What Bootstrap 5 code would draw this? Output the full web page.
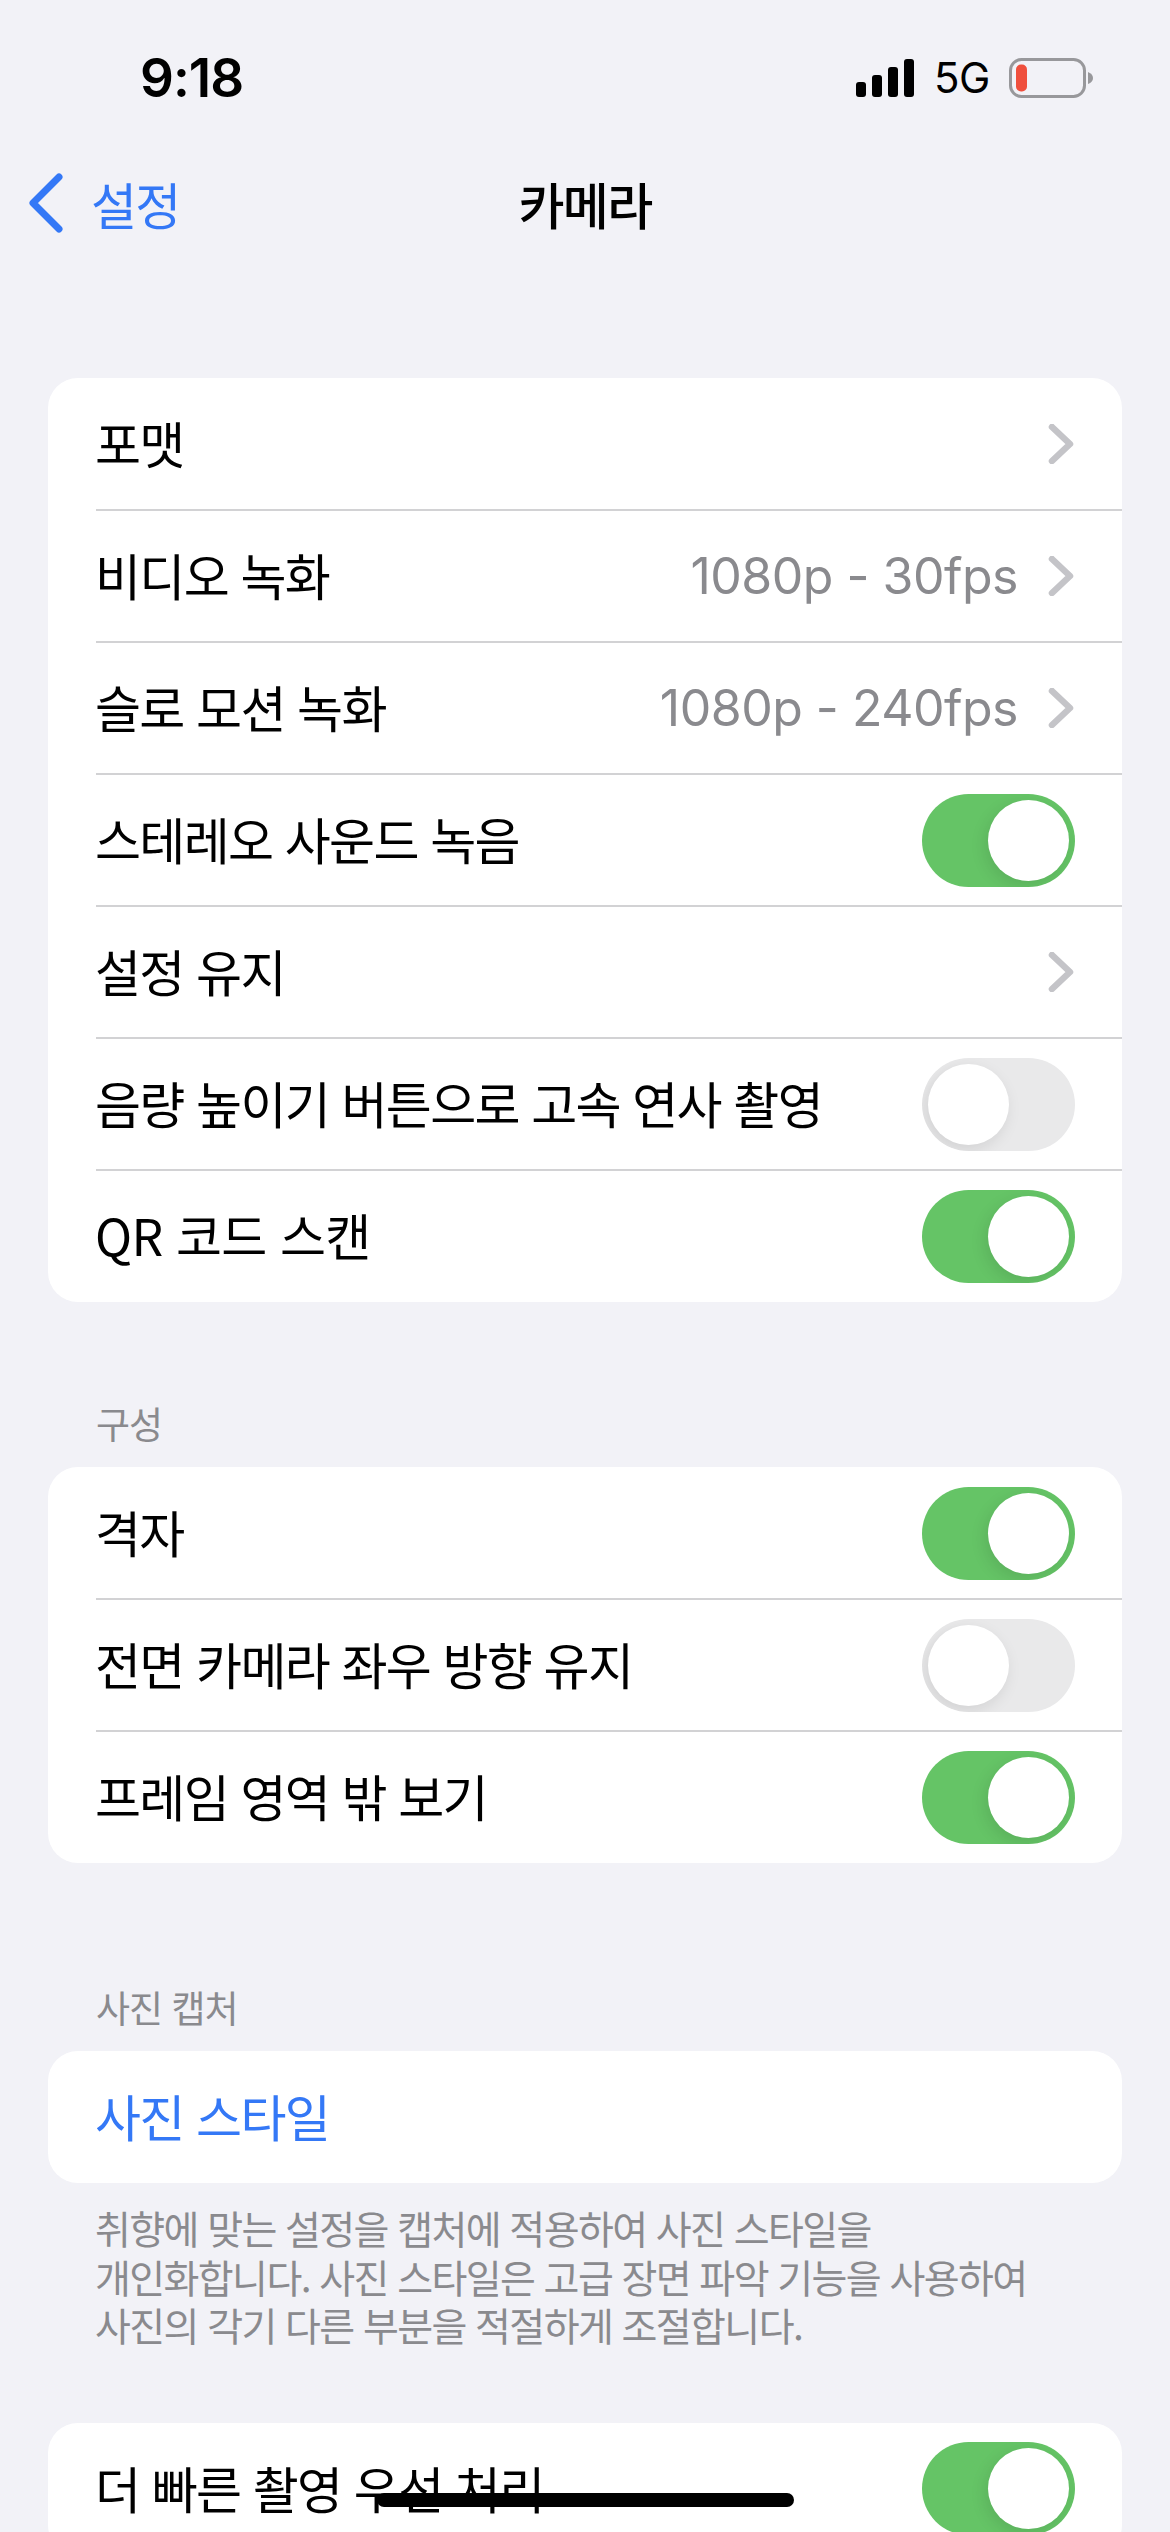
<!DOCTYPE html>
<html lang="ko">
<head>
<meta charset="utf-8">
<title>카메라</title>
<link href="https://cdn.jsdelivr.net/npm/bootstrap@5.3.0/dist/css/bootstrap.min.css" rel="stylesheet">
<style>
html,body{height:2532px;overflow:hidden}
body{background:#f2f2f7;color:#000;font-family:"Noto Sans CJK KR","Liberation Sans",sans-serif;font-size:50px;line-height:1.2;letter-spacing:-1.65px}
.status-row{height:161px;padding:52px 0 0 140px}
.clock{font:600 53px/52px Inter,sans-serif;letter-spacing:-1px;width:104px}
.status-icons{margin-left:612px;gap:20px;height:52px}
.net{font:400 42px/52px Inter,sans-serif;letter-spacing:-.5px;width:55px}
.nav-row{height:84px;grid-template-columns:1fr auto 1fr;padding:0 28px}
.back-link{color:#3478f6;text-decoration:none;gap:27px;font-size:50px}
.nav-title{font-weight:500;font-size:50px}
.groups{padding:133px 48px 0}
.ios-group{background:#fff;border:0;border-radius:30px;--bs-list-group-bg:#fff}
.ios-row{height:132px;padding:0 48px 0 47px;border:0;background:transparent;color:#000;position:relative}
.ios-row+.ios-row::before{content:"";position:absolute;left:48px;right:0;top:-1px;height:2px;background:#d2d2d4}
.ios-row .lab{flex:1;padding-bottom:4px}
.ios-row .lab-latin{letter-spacing:-.65px}
.val{font:400 50px/1 Inter,"Liberation Sans",sans-serif;color:#8a8a8e;letter-spacing:-.5px;margin-right:30px}
.chev{width:26px;height:40px;display:block}
.ctl{width:153px;height:93px;border-radius:47px;background:#e9e9ea;position:relative;overflow:hidden;margin-right:-1px}
.ctl::after{content:"";position:absolute;top:6px;left:6px;width:81px;height:81px;border-radius:50%;background:#fff;box-shadow:-3px 5px 16px rgba(0,0,0,.1)}
.ctl.on{background:#65c466}
.ctl.on::after{left:66px}
.sect-head{color:#8a8a8e;font-size:37px;line-height:48px;padding:0 48px;letter-spacing:-1px;margin-bottom:20px}
.sect-foot{color:#8a8a8e;font-size:39px;line-height:48.5px;padding:0 47px;letter-spacing:-1.6px;margin-top:20px}
.blue{color:#3478f6!important}
.home-bar{position:fixed;left:377px;top:2493px;width:417px;height:14px;border-radius:7px;background:#000}
.mt-a{margin-top:74px}
.mt-b{margin-top:120px}
.mt-c{margin-top:97px}
</style>
</head>
<body>
<header>
  <div class="status-row d-flex align-items-start">
    <div class="clock">9:18</div>
    <div class="status-icons d-flex align-items-center">
      <svg width="58" height="38" viewBox="0 0 58 38" fill="#000"><rect x="0" y="23" width="10" height="15" rx="3"/><rect x="16" y="16" width="10" height="22" rx="3"/><rect x="32" y="8" width="10" height="30" rx="3"/><rect x="48" y="0" width="10" height="38" rx="3"/></svg>
      <span class="net">5G</span>
      <svg width="84" height="40" viewBox="0 0 84 40"><rect x="1.5" y="1.5" width="74" height="37" rx="11" fill="none" stroke="#98989b" stroke-width="3"/><rect x="7" y="6.500" width="11" height="27" rx="5" fill="#ef4f3d"/><path d="M79 14q5 2 5 6t-5 6z" fill="#98989b"/></svg>
    </div>
  </div>
  <nav class="nav-row d-grid align-items-center">
    <a class="back-link d-flex align-items-center" href="#">
      <svg width="36" height="60" viewBox="0 0 36 60"><path d="M31 4 5 30l26 26" fill="none" stroke="#3478f6" stroke-width="7" stroke-linecap="round" stroke-linejoin="round"/></svg>
      <span>설정</span>
    </a>
    <div class="nav-title">카메라</div>
    <div></div>
  </nav>
</header>
<main class="groups">
  <div class="list-group ios-group">
    <div class="list-group-item ios-row d-flex align-items-center"><span class="lab">포맷</span><svg class="chev" viewBox="0 0 26 40"><path d="M4 3l18 17L4 37" fill="none" stroke="#c4c4c8" stroke-width="6.500" stroke-linecap="round" stroke-linejoin="round"/></svg></div>
    <div class="list-group-item ios-row d-flex align-items-center"><span class="lab">비디오 녹화</span><span class="val">1080p - 30fps</span><svg class="chev" viewBox="0 0 26 40"><path d="M4 3l18 17L4 37" fill="none" stroke="#c4c4c8" stroke-width="6.500" stroke-linecap="round" stroke-linejoin="round"/></svg></div>
    <div class="list-group-item ios-row d-flex align-items-center"><span class="lab">슬로 모션 녹화</span><span class="val">1080p - 240fps</span><svg class="chev" viewBox="0 0 26 40"><path d="M4 3l18 17L4 37" fill="none" stroke="#c4c4c8" stroke-width="6.500" stroke-linecap="round" stroke-linejoin="round"/></svg></div>
    <div class="list-group-item ios-row d-flex align-items-center"><span class="lab">스테레오 사운드 녹음</span><span class="ctl on"></span></div>
    <div class="list-group-item ios-row d-flex align-items-center"><span class="lab">설정 유지</span><svg class="chev" viewBox="0 0 26 40"><path d="M4 3l18 17L4 37" fill="none" stroke="#c4c4c8" stroke-width="6.500" stroke-linecap="round" stroke-linejoin="round"/></svg></div>
    <div class="list-group-item ios-row d-flex align-items-center"><span class="lab">음량 높이기 버튼으로 고속 연사 촬영</span><span class="ctl"></span></div>
    <div class="list-group-item ios-row d-flex align-items-center"><span class="lab lab-latin">QR 코드 스캔</span><span class="ctl on"></span></div>
  </div>

  <div class="sect-head mt-c">구성</div>
  <div class="list-group ios-group">
    <div class="list-group-item ios-row d-flex align-items-center"><span class="lab">격자</span><span class="ctl on"></span></div>
    <div class="list-group-item ios-row d-flex align-items-center"><span class="lab">전면 카메라 좌우 방향 유지</span><span class="ctl"></span></div>
    <div class="list-group-item ios-row d-flex align-items-center"><span class="lab">프레임 영역 밖 보기</span><span class="ctl on"></span></div>
  </div>

  <div class="sect-head mt-b">사진 캡처</div>
  <div class="list-group ios-group">
    <div class="list-group-item ios-row d-flex align-items-center blue"><span class="lab">사진 스타일</span></div>
  </div>
  <div class="sect-foot">취향에 맞는 설정을 캡처에 적용하여 사진 스타일을<br>개인화합니다. 사진 스타일은 고급 장면 파악 기능을 사용하여<br>사진의 각기 다른 부분을 적절하게 조절합니다.</div>

  <div class="list-group ios-group mt-a">
    <div class="list-group-item ios-row d-flex align-items-center"><span class="lab">더 빠른 촬영 우선 처리</span><span class="ctl on"></span></div>
  </div>
</main>
<div class="home-bar"></div>
</body>
</html>
